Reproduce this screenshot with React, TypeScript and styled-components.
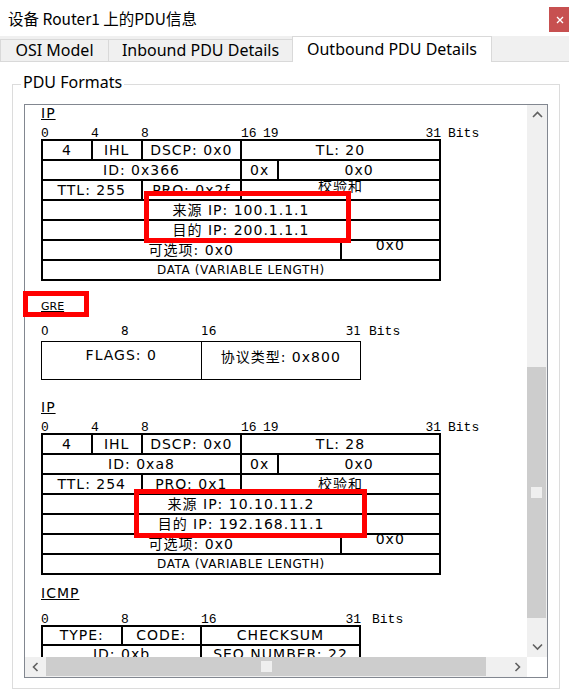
import React from "react";
import styled, { createGlobalStyle } from "styled-components";

const GlobalStyle = createGlobalStyle`
  html, body { margin: 0; padding: 0; background: #ffffff; }
  body { overflow: hidden; }
  *, *::before, *::after { box-sizing: border-box; }
`;

const Window = styled.div`
  width: 569px;
  height: 691px;
  display: flex;
  flex-direction: column;
  background: #ffffff;
  overflow: hidden;
  font-family: "Noto Sans", sans-serif;
  color: #000;
`;

const TitleBar = styled.header`
  height: 36px;
  flex: none;
  display: flex;
  justify-content: space-between;
  align-items: flex-start;
`;

const Title = styled.h1`
  margin: 6px 0 0 8px;
  font-family: "Noto Sans CJK SC", sans-serif;
  font-weight: 400;
  font-size: 15.5px;
  line-height: 24px;
  color: #000;
`;

const CloseButton = styled.div`
  margin-top: 7px;
  width: 20px;
  height: 25px;
  background: #c75050;
  display: flex;
  align-items: center;
  justify-content: center;
  padding-left: 2px;
`;

const TabStrip = styled.nav`
  height: 26px;
  flex: none;
  display: flex;
  align-items: flex-end;
  background: #f0f0f0;
  border-bottom: 1px solid #d9d9d9;
`;

const Tab = styled.div<{ $active?: boolean; $width: number }>`
  position: relative;
  z-index: ${(p) => (p.$active ? 1 : 0)};
  width: ${(p) => p.$width}px;
  height: ${(p) => (p.$active ? 26 : 22)}px;
  margin-bottom: ${(p) => (p.$active ? -1 : 0)}px;
  margin-left: -1px;
  &:first-child { margin-left: 0; }
  border: 1px solid #d9d9d9;
  border-bottom: none;
  background: ${(p) => (p.$active ? "#ffffff" : "#f0f0f0")};
  font-size: 16px;
  line-height: ${(p) => (p.$active ? 24 : 21)}px;
  text-align: center;
  white-space: nowrap;
  color: #000;
`;

const GroupBox = styled.section`
  position: relative;
  flex: 1;
  min-height: 0;
  margin: 22px 9px 2px 12px;
  border: 1px solid #dcdcdc;
  padding: 19px 11px 10px 11px;
  display: flex;
  flex-direction: column;
`;

const GroupLabel = styled.h2`
  position: absolute;
  top: -14px;
  left: 8px;
  margin: 0;
  padding: 0 2px;
  background: #ffffff;
  font-size: 16px;
  font-weight: 400;
  line-height: 22px;
  color: #000;
`;

const ScrollPane = styled.div`
  flex: 1;
  min-height: 0;
  border: 1px solid #828790;
  display: grid;
  grid-template-columns: minmax(0, 1fr) 20px;
  grid-template-rows: minmax(0, 1fr) 20px;
`;

const Viewport = styled.div`
  min-width: 0;
  min-height: 0;
  overflow-x: visible;
  overflow-y: clip;
  background: #ffffff;
`;

const VScroll = styled.div`
  background: #f0f0f0;
  display: flex;
  flex-direction: column;
`;

const HScroll = styled.div`
  background: #f0f0f0;
  display: flex;
  flex-direction: row;
`;

const Corner = styled.div`
  background: #ffffff;
`;

const ArrowButton = styled.div`
  flex: none;
  width: 20px;
  height: 20px;
  display: flex;
  align-items: center;
  justify-content: center;
`;

const Track = styled.div<{ $vertical?: boolean }>`
  flex: 1;
  min-width: 0;
  min-height: 0;
  display: flex;
  flex-direction: ${(p) => (p.$vertical ? "column" : "row")};
`;

const Thumb = styled.div<{ $vertical?: boolean; $offset: number; $size: number }>`
  flex: none;
  background: #cdcdcd;
  display: flex;
  align-items: center;
  justify-content: center;
  ${(p) =>
    p.$vertical
      ? `margin-top: ${p.$offset}px; height: ${p.$size}px; margin-right: 1px;`
      : `margin-left: ${p.$offset}px; width: ${p.$size}px; margin-bottom: 1px;`}
  &::after {
    content: "";
    width: 11px;
    height: 11px;
    background: #efefef;
  }
`;

const Content = styled.div`
  display: flex;
  flex-direction: column;
  padding-left: 16px;
`;

const Section = styled.section<{ $mt: number }>`
  margin-top: ${(p) => p.$mt}px;
  display: flex;
  flex-direction: column;
  align-items: flex-start;
`;

const Heading = styled.div<{ $size: number; $lh: number; $spacing: number }>`
  position: relative;
  font-family: "DejaVu Sans", sans-serif;
  font-size: ${(p) => p.$size}px;
  line-height: ${(p) => p.$lh}px;
  letter-spacing: ${(p) => p.$spacing}px;
  text-decoration: underline;
  color: #000;
  white-space: nowrap;
`;

const Ruler = styled.div<{ $bit: number; $mt: number; $mb: number; $mono: boolean }>`
  display: grid;
  grid-template-columns: repeat(32, ${(p) => p.$bit}px) max-content;
  grid-template-rows: 11px;
  height: 11px;
  margin-top: ${(p) => p.$mt}px;
  margin-bottom: ${(p) => p.$mb}px;
  line-height: 11px;
  font-family: ${(p) => (p.$mono ? `"Liberation Mono", monospace` : `"DejaVu Sans", sans-serif`)};
  font-size: ${(p) => (p.$mono ? 13 : 12)}px;
  color: #000;
`;

const Tick = styled.span<{ $col: number; $span: number; $end?: boolean; $gap?: number; $mono?: boolean }>`
  grid-row: 1;
  grid-column: ${(p) => p.$col} / span ${(p) => p.$span};
  justify-self: ${(p) => (p.$end ? "end" : "start")};
  white-space: nowrap;
  padding-left: ${(p) => p.$gap ?? 0}px;
  ${(p) => (p.$mono ? `font-family: "Liberation Mono", monospace; font-size: 13px;` : "")}
`;

const Table = styled.div<{ $width: number; $line: number; $row: number }>`
  position: relative;
  width: ${(p) => p.$width}px;
  display: grid;
  grid-template-columns: repeat(32, minmax(0, 1fr));
  grid-auto-rows: ${(p) => p.$row}px;
  gap: ${(p) => p.$line}px;
  padding: ${(p) => p.$line}px;
  background: #000;
`;

const Cell = styled.div<{ $span: number; $lift: number; $small: boolean; $lh: number; $top?: number }>`
  grid-column: span ${(p) => p.$span};
  min-width: 0;
  background: #ffffff;
  display: flex;
  justify-content: center;
  align-items: ${(p) => (p.$top !== undefined ? "flex-start" : "center")};
  padding-top: ${(p) => p.$top ?? 0}px;
  padding-bottom: ${(p) => p.$lift * 2}px;
  font-family: "DejaVu Sans", "Noto Sans CJK SC", sans-serif;
  font-size: ${(p) => (p.$small ? 12 : 14)}px;
  letter-spacing: ${(p) => (p.$small ? 0.6 : 1)}px;
  line-height: ${(p) => p.$lh}px;
  white-space: nowrap;
  color: #000;
`;

const Highlight = styled.div<{ $x: number; $y: number; $w: number; $h: number }>`
  position: absolute;
  left: ${(p) => p.$x}px;
  top: ${(p) => p.$y}px;
  width: ${(p) => p.$w}px;
  height: ${(p) => p.$h}px;
  border: 5px solid #ff0000;
  pointer-events: none;
`;

type Dir = "up" | "down" | "left" | "right";

const Chevron = ({ dir }: { dir: Dir }) => {
  const vertical = dir === "up" || dir === "down";
  const pts: Record<Dir, string> = {
    up: "1,6 5.5,1.5 10,6",
    down: "1,1.5 5.5,6 10,1.5",
    left: "5.5,1 1.5,5 5.5,9",
    right: "1.5,1 5.5,5 1.5,9",
  };
  return (
    <svg width={vertical ? 11 : 7} height={vertical ? 8 : 10} viewBox={vertical ? "0 0 11 8" : "0 0 7 10"}>
      <polyline points={pts[dir]} fill="none" stroke="#606060" strokeWidth={1.6} />
    </svg>
  );
};

type CellSpec = { text: string; span: number; lift?: number; small?: boolean; top?: number };
type TickSpec = { text: string; col: number; span?: number; end?: boolean };

const ipTicks: TickSpec[] = [
  { text: "0", col: 1 },
  { text: "4", col: 5 },
  { text: "8", col: 9 },
  { text: "16", col: 17, span: 2 },
  { text: "19", col: 17, span: 3, end: true },
  { text: "31", col: 29, span: 4, end: true },
];

const byteTicks: TickSpec[] = [
  { text: "0", col: 1 },
  { text: "8", col: 9 },
  { text: "16", col: 17, span: 2 },
  { text: "31", col: 29, span: 4, end: true },
];

const ipRows = (v: {
  tl: string; id: string; ttl: string; pro: string; src: string; dst: string; sumLift: number;
}): CellSpec[] => [
  { text: "4", span: 4 },
  { text: "IHL", span: 4 },
  { text: "DSCP: 0x0", span: 8 },
  { text: `TL: ${v.tl}`, span: 16 },
  { text: `ID: ${v.id}`, span: 16 },
  { text: "0x", span: 3 },
  { text: "0x0", span: 13 },
  { text: `TTL: ${v.ttl}`, span: 8 },
  { text: `PRO: ${v.pro}`, span: 8 },
  { text: "校验和", span: 16, lift: v.sumLift },
  { text: `来源 IP: ${v.src}`, span: 32 },
  { text: `目的 IP: ${v.dst}`, span: 32 },
  { text: "可选项: 0x0", span: 24 },
  { text: "0x0", span: 8, lift: 5 },
  { text: "DATA (VARIABLE LENGTH)", span: 32, small: true },
];

const ip1 = ipRows({ tl: "20", id: "0x366", ttl: "255", pro: "0x2f", src: "100.1.1.1", dst: "200.1.1.1", sumLift: 4 });
const ip2 = ipRows({ tl: "28", id: "0xa8", ttl: "254", pro: "0x1", src: "10.10.11.2", dst: "192.168.11.1", sumLift: 0 });

const greCells: CellSpec[] = [
  { text: "FLAGS: 0", span: 16, top: 4 },
  { text: "协议类型: 0x800", span: 16, top: 6 },
];

const icmpCells: CellSpec[] = [
  { text: "TYPE:", span: 8 },
  { text: "CODE:", span: 8 },
  { text: "CHECKSUM", span: 16 },
  { text: "ID: 0xb", span: 16 },
  { text: "SEQ NUMBER: 22", span: 16 },
];

const BitRuler = ({
  ticks, bit, mt, mb, mono, bitsGap,
}: { ticks: TickSpec[]; bit: number; mt: number; mb: number; mono: boolean; bitsGap: number }) => (
  <Ruler $bit={bit} $mt={mt} $mb={mb} $mono={mono}>
    {ticks.map((t) => (
      <Tick key={t.text} $col={t.col} $span={t.span ?? 1} $end={t.end}>
        {t.text}
      </Tick>
    ))}
    <Tick $col={33} $span={1} $gap={bitsGap} $mono>
      Bits
    </Tick>
  </Ruler>
);

const Cells = ({ cells, lh }: { cells: CellSpec[]; lh: number }) => (
  <>
    {cells.map((c, i) => (
      <Cell key={i} $span={c.span} $lift={c.lift ?? 0} $small={!!c.small} $lh={lh} $top={c.top}>
        {c.text}
      </Cell>
    ))}
  </>
);

export default function App() {
  return (
    <>
      <GlobalStyle />
      <Window>
        <TitleBar>
          <Title>设备 Router1 上的PDU信息</Title>
          <CloseButton>
            <svg width="8" height="8" viewBox="0 0 8 8">
              <path d="M1 1 L7 7 M7 1 L1 7" stroke="#ffffff" strokeWidth="1.3" fill="none" />
            </svg>
          </CloseButton>
        </TitleBar>
        <TabStrip>
          <Tab $width={109}>OSI Model</Tab>
          <Tab $width={185}>Inbound PDU Details</Tab>
          <Tab $width={200} $active>
            Outbound PDU Details
          </Tab>
        </TabStrip>
        <GroupBox>
          <GroupLabel>PDU Formats</GroupLabel>
          <ScrollPane>
            <Viewport>
              <Content>
                <Section $mt={0}>
                  <Heading $size={14} $lh={16} $spacing={1}>IP</Heading>
                  <BitRuler ticks={ipTicks} bit={12.5} mt={7} mb={0} mono bitsGap={7} />
                  <Table $width={400} $line={2} $row={18}>
                    <Cells cells={ip1} lh={18} />
                    <Highlight $x={103} $y={52} $w={207} $h={52} />
                  </Table>
                </Section>

                <Section $mt={19}>
                  <Heading $size={11} $lh={13} $spacing={0}>
                    GRE
                    <Highlight $x={-18} $y={-9} $w={66} $h={26} />
                  </Heading>
                  <BitRuler ticks={byteTicks} bit={10} mt={13} mb={4} mono={false} bitsGap={8} />
                  <Table $width={320} $line={1} $row={37}>
                    <Cells cells={greCells} lh={18} />
                  </Table>
                </Section>

                <Section $mt={19}>
                  <Heading $size={14} $lh={16} $spacing={1}>IP</Heading>
                  <BitRuler ticks={ipTicks} bit={12.5} mt={7} mb={0} mono bitsGap={7} />
                  <Table $width={400} $line={2} $row={18}>
                    <Cells cells={ip2} lh={18} />
                    <Highlight $x={93} $y={56} $w={233} $h={49} />
                  </Table>
                </Section>

                <Section $mt={10}>
                  <Heading $size={14} $lh={16} $spacing={1}>ICMP</Heading>
                  <BitRuler ticks={byteTicks} bit={10} mt={13} mb={0} mono bitsGap={11} />
                  <Table $width={320} $line={2} $row={17}>
                    <Cells cells={icmpCells} lh={17} />
                  </Table>
                </Section>
              </Content>
            </Viewport>
            <VScroll>
              <ArrowButton>
                <Chevron dir="up" />
              </ArrowButton>
              <Track $vertical>
                <Thumb $vertical $offset={242} $size={251} />
              </Track>
              <ArrowButton>
                <Chevron dir="down" />
              </ArrowButton>
            </VScroll>
            <HScroll>
              <ArrowButton>
                <Chevron dir="left" />
              </ArrowButton>
              <Track>
                <Thumb $offset={1} $size={440} />
              </Track>
              <ArrowButton>
                <Chevron dir="right" />
              </ArrowButton>
            </HScroll>
            <Corner />
          </ScrollPane>
        </GroupBox>
      </Window>
    </>
  );
}
